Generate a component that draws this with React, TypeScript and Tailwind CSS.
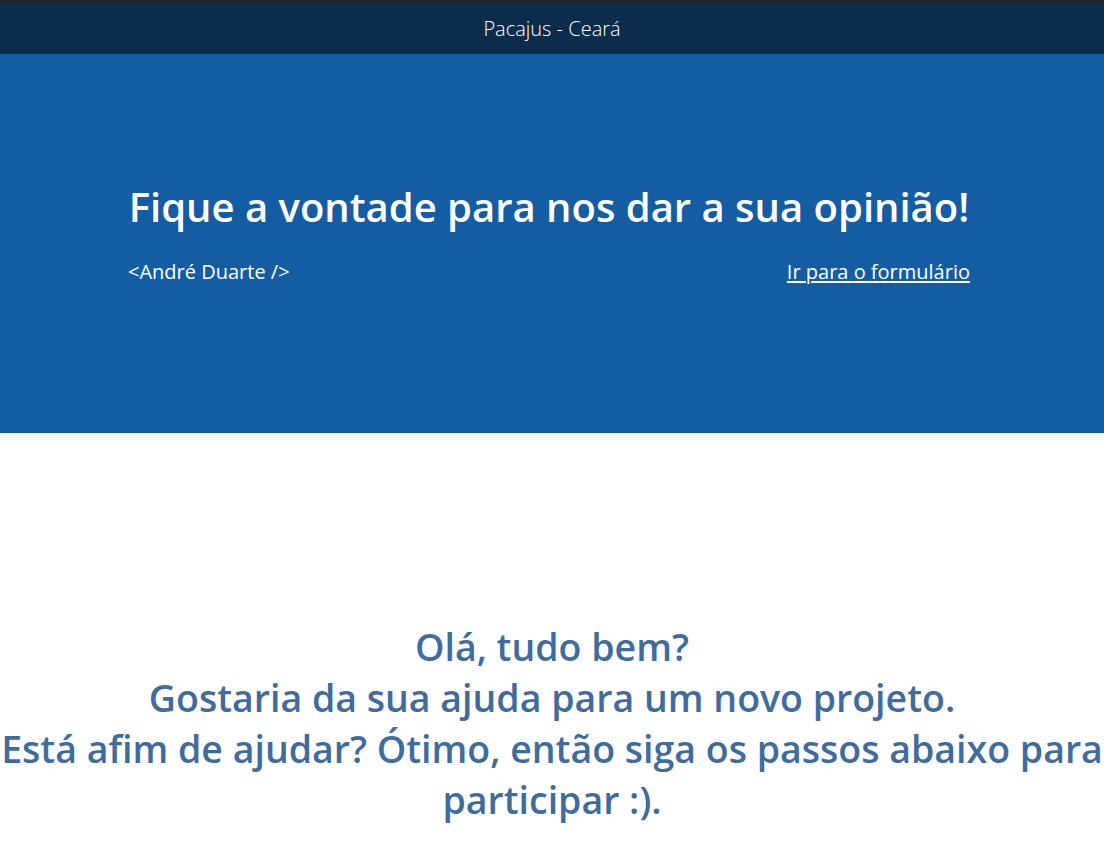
export default function App() {
  return (
    <div className="min-h-[855px] bg-white" style={{ fontFamily: '"Open Sans", "Noto Sans", sans-serif' }}>
      <div className="h-[3px] bg-[#1c2733]" />
      <header className="h-[51px] bg-[#0b2c4a] flex items-center justify-center">
        <span className="text-white text-[20px] font-light">Pacajus - Ceará</span>
      </header>
      <section className="h-[379px] bg-[#155da3] flex flex-col pt-[126px] pl-[128px] pr-[134px]">
        <h1 className="text-white text-[40px] font-semibold text-center leading-[54px]">
          Fique a vontade para nos dar a sua opinião!
        </h1>
        <div className="flex justify-between items-center mt-[24px] text-white text-[20px] leading-[27px]">
          <span>&lt;André Duarte /&gt;</span>
          <a href="#" className="underline underline-offset-2">Ir para o formulário</a>
        </div>
      </section>
      <section className="pt-[188px] pb-[20px] text-center">
        <p className="text-[#3f6c9d] text-[37.5px] font-semibold leading-[51px]">
          Olá, tudo bem?
          <br />
          Gostaria da sua ajuda para um novo projeto.
          <br />
          Está afim de ajudar? Ótimo, então siga os passos abaixo para participar :).
        </p>
      </section>
    </div>
  );
}
